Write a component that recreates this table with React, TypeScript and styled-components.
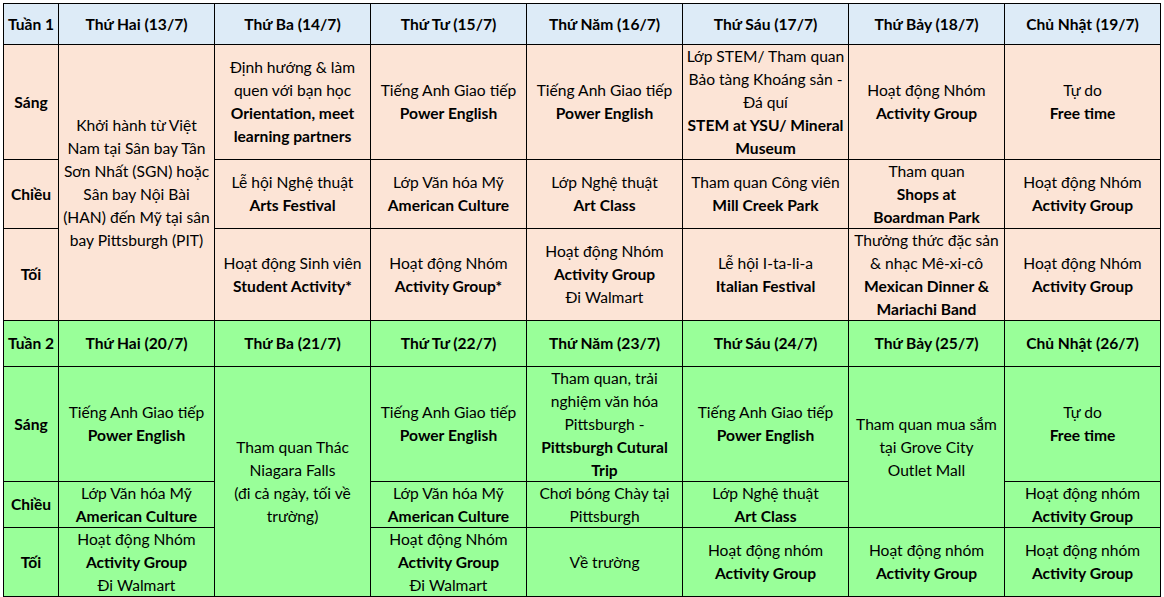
import styled, { createGlobalStyle } from "styled-components";

const GlobalStyle = createGlobalStyle`
  body {
    margin: 0;
    background: #ffffff;
    font-family: "Lato", "Liberation Sans", sans-serif;
  }
`

type Tone = "blue" | "peach" | "green"

const tones: Record<Tone, string> = {
  blue: "#ddebf7",
  peach: "#fce4d6",
  green: "#99ff99",
}

const Page = styled.div`
  padding: 3px;
`

const Schedule = styled.div`
  display: grid;
  grid-template-columns: 55px 156px 156px 156px 156px 166px 156px 156px;
  grid-template-rows: 41px 115px 69px 92px 46px 115px 46px 69px;
  width: 1158px;
  border-top: 1px solid #000;
  border-left: 1px solid #000;
  box-sizing: border-box;
`

const Cell = styled.div<{ $tone: Tone; $span?: number; $strong?: boolean }>`
  grid-row: span ${props => props.$span || 1};
  display: flex;
  flex-direction: column;
  align-items: center;
  justify-content: center;
  background-color: ${props => tones[props.$tone]};
  border-right: 1px solid #000;
  border-bottom: 1px solid #000;
  font-size: 15.6px;
  line-height: 23px;
  color: #000;
  font-weight: ${props => props.$strong ? 700 : 400};
  text-align: center;
  white-space: nowrap;
  overflow: visible;
  min-height: 0;
`

const Line = styled.span<{ $bold?: boolean }>`
  display: block;
  font-weight: ${props => props.$bold ? 700 : "inherit"};
`

interface ILine {
  t: string,
  b?: boolean,
}

interface ICell {
  lines: ILine[],
  span?: number,
  strong?: boolean,
}

const n = (t: string): ILine => ({ t })
const b = (t: string): ILine => ({ t, b: true })
const label = (t: string): ICell => ({ lines: [n(t)], strong: true })

const english = [n("Tiếng Anh Giao tiếp"), b("Power English")]
const culture = [n("Lớp Văn hóa Mỹ"), b("American Culture")]
const walmart = [n("Hoạt động Nhóm"), b("Activity Group"), n("Đi Walmart")]
const groupBig = [n("Hoạt động Nhóm"), b("Activity Group")]
const groupSmall = [n("Hoạt động nhóm"), b("Activity Group")]
const freeTime = [n("Tự do"), b("Free time")]
const artClass = [n("Lớp Nghệ thuật"), b("Art Class")]

const days = ["Thứ Hai", "Thứ Ba", "Thứ Tư", "Thứ Năm", "Thứ Sáu", "Thứ Bảy", "Chủ Nhật"]

const header = (week: string, start: number): ICell[] => [
  label(week),
  ...days.map((d, i) => label(`${d} (${start + i}/7)`)),
]

const week1: ICell[] = [
  label("Sáng"),
  {
    lines: [
      n("Khởi hành từ Việt"),
      n("Nam tại Sân bay Tân"),
      n("Sơn Nhất (SGN) hoặc"),
      n("Sân bay Nội Bài"),
      n("(HAN) đến Mỹ tại sân"),
      n("bay Pittsburgh (PIT)"),
    ],
    span: 3,
  },
  { lines: [n("Định hướng & làm"), n("quen với bạn học"), b("Orientation, meet"), b("learning partners")] },
  { lines: english },
  { lines: english },
  { lines: [n("Lớp STEM/ Tham quan"), n("Bảo tàng Khoáng sản -"), n("Đá quí"), b("STEM at YSU/ Mineral"), b("Museum")] },
  { lines: groupBig },
  { lines: freeTime },

  label("Chiều"),
  { lines: [n("Lễ hội Nghệ thuật"), b("Arts Festival")] },
  { lines: culture },
  { lines: artClass },
  { lines: [n("Tham quan Công viên"), b("Mill Creek Park")] },
  { lines: [n("Tham quan"), b("Shops at"), b("Boardman Park")] },
  { lines: groupBig },

  label("Tối"),
  { lines: [n("Hoạt động Sinh viên"), b("Student Activity*")] },
  { lines: [n("Hoạt động Nhóm"), b("Activity Group*")] },
  { lines: walmart },
  { lines: [n("Lễ hội I-ta-li-a"), b("Italian Festival")] },
  { lines: [n("Thưởng thức đặc sản"), n("& nhạc Mê-xi-cô"), b("Mexican Dinner &"), b("Mariachi Band")] },
  { lines: groupBig },
]

const week2: ICell[] = [
  label("Sáng"),
  { lines: english },
  { lines: [n("Tham quan Thác"), n("Niagara Falls"), n("(đi cả ngày, tối về"), n("trường)")], span: 3 },
  { lines: english },
  { lines: [n("Tham quan, trải"), n("nghiệm văn hóa"), n("Pittsburgh -"), b("Pittsburgh Cutural"), b("Trip")] },
  { lines: english },
  { lines: [n("Tham quan mua sắm"), n("tại Grove City"), n("Outlet Mall")], span: 2 },
  { lines: freeTime },

  label("Chiều"),
  { lines: culture },
  { lines: culture },
  { lines: [n("Chơi bóng Chày tại"), n("Pittsburgh")] },
  { lines: artClass },
  { lines: groupSmall },

  label("Tối"),
  { lines: walmart },
  { lines: walmart },
  { lines: [n("Về trường")] },
  { lines: groupSmall },
  { lines: groupSmall },
  { lines: groupSmall },
]

function renderCells(cells: ICell[], tone: Tone, key: string) {
  return cells.map((c, i) => (
    <Cell key={`${key}-${i}`} $tone={tone} $span={c.span} $strong={c.strong}>
      {c.lines.map((l, j) => <Line key={j} $bold={l.b}>{l.t}</Line>)}
    </Cell>
  ))
}

function App() {
  return (
    <Page>
      <GlobalStyle />
      <Schedule>
        {renderCells(header("Tuần 1", 13), "blue", "h1")}
        {renderCells(week1, "peach", "w1")}
        {renderCells(header("Tuần 2", 20), "green", "h2")}
        {renderCells(week2, "green", "w2")}
      </Schedule>
    </Page>
  )
}

export default App;
